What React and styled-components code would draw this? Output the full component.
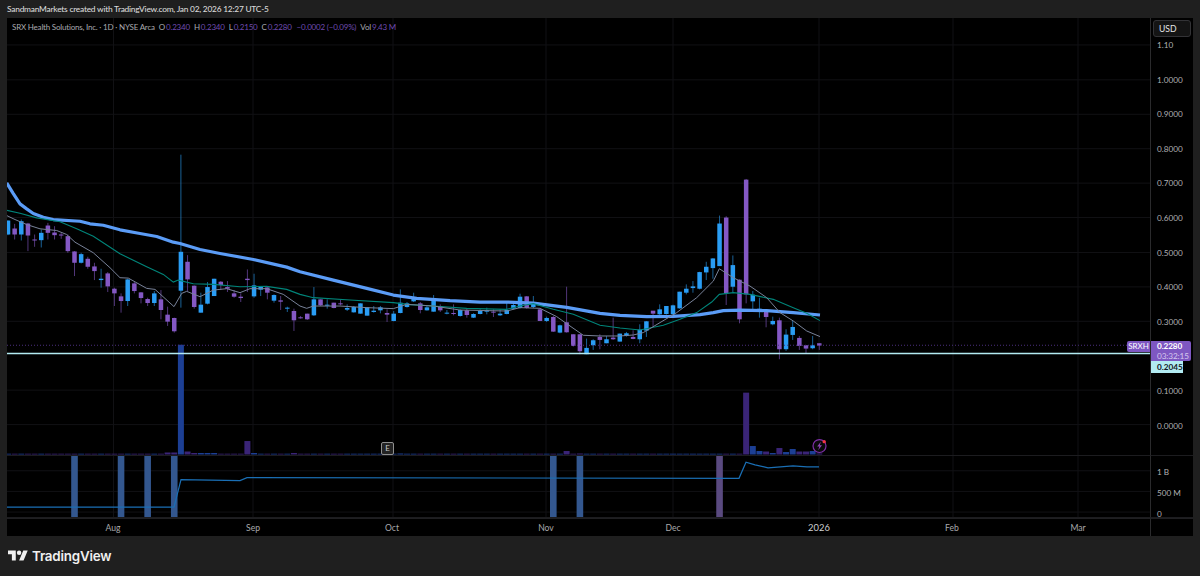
import React from "react";
import styled, { createGlobalStyle } from "styled-components";

const BLUE = "#2a9df4";
const PURPLE = "#8458c4";
const BAR_STEP = 6.65;
const barX = (i) => 8 + i * BAR_STEP;

// candles read off the picture: [wickTop, bodyTop, bodyBottom, wickBottom, colour], y in zoomed px
const section1 = [
  [153, 153, 195, 197, "b"], [163, 177, 195, 210, "p"], [150, 155, 195, 213, "b"], [160, 162, 198, 245, "p"],
  [195, 210, 212, 232, "p"], [180, 190, 212, 234, "b"], [160, 168, 190, 210, "p"], [170, 189, 197, 210, "p"],
  [190, 195, 198, 208, "p"], [195, 200, 245, 250, "p"], [245, 246, 280, 320, "p"], [250, 254, 280, 282, "b"],
  [262, 268, 292, 298, "p"], [280, 291, 305, 332, "p"], [298, 328, 332, 355, "b"], [308, 312, 351, 368, "p"],
  [355, 358, 372, 410, "p"], [372, 381, 395, 430, "p"], [328, 330, 395, 410, "b"], [338, 342, 365, 372, "p"],
  [368, 369, 386, 402, "p"], [385, 389, 401, 410, "p"], [365, 372, 401, 410, "b"], [362, 390, 422, 450, "p"],
  [412, 436, 457, 470, "p"], [445, 446, 486, 490, "p"], [-45, 247, 364, 415, "b"], [257, 277, 330, 365, "p"],
  [348, 349, 413, 418, "p"], [370, 406, 430, 430, "b"], [338, 353, 403, 405, "b"], [328, 328, 380, 380, "b"],
  [335, 337, 347, 362, "p"], [335, 353, 358, 368, "p"], [362, 372, 382, 385, "p"], [372, 382, 386, 398, "p"],
  [300, 328, 332, 368, "p"], [313, 348, 381, 385, "b"], [350, 350, 361, 380, "b"], [352, 354, 370, 390, "p"],
  [375, 377, 394, 400, "b"], [380, 393, 397, 422, "p"], [412, 415, 418, 428, "b"], [418, 425, 453, 485, "p"],
];
const section2 = [
  [170, 174, 176, 178, "p"], [163, 163, 180, 182, "p"], [83, 120, 168, 170, "b"], [120, 120, 138, 140, "p"],
  [120, 136, 139, 148, "b"], [130, 130, 146, 147, "p"], [120, 132, 135, 138, "p"], [135, 146, 151, 155, "b"],
  [140, 143, 159, 160, "b"], [132, 132, 163, 163, "b"], [144, 144, 169, 169, "b"], [140, 154, 158, 160, "b"],
  [140, 144, 153, 162, "b"], [150, 161, 166, 188, "p"], [155, 163, 185, 186, "b"], [90, 130, 161, 162, "b"],
  [128, 132, 143, 145, "b"], [100, 116, 126, 128, "b"], [128, 132, 152, 162, "p"], [138, 144, 153, 154, "b"],
  [107, 118, 157, 157, "b"], [135, 140, 153, 158, "p"], [152, 160, 163, 165, "b"], [135, 161, 163, 168, "p"],
  [150, 152, 170, 172, "b"], [148, 153, 167, 175, "p"], [162, 164, 175, 176, "b"], [150, 155, 164, 165, "b"],
  [145, 153, 157, 165, "b"], [150, 157, 160, 173, "p"], [150, 163, 168, 170, "b"], [130, 152, 164, 165, "b"],
  [130, 137, 148, 150, "b"], [103, 112, 146, 148, "b"], [110, 111, 146, 148, "p"], [110, 132, 143, 146, "b"],
  [148, 150, 185, 185, "p"], [172, 176, 185, 188, "b"], [170, 173, 217, 218, "p"], [196, 198, 220, 222, "b"],
  [82, 189, 219, 220, "p"], [225, 225, 260, 262, "p"], [225, 225, 276, 285, "p"], [238, 266, 285, 285, "b"],
  [240, 243, 258, 272, "b"],
];
const section3 = [
  [495, 503, 512, 540, "p"], [500, 510, 522, 522, "b"], [445, 505, 510, 512, "p"], [493, 493, 517, 517, "b"],
  [488, 492, 500, 502, "b"], [483, 503, 509, 510, "p"], [465, 481, 510, 522, "b"], [455, 456, 484, 503, "b"],
  [425, 424, 433, 472, "p"], [405, 420, 435, 437, "b"], [410, 410, 434, 436, "b"], [406, 408, 435, 436, "b"],
  [367, 367, 417, 418, "b"], [345, 358, 370, 375, "b"], [335, 351, 356, 370, "b"], [307, 308, 358, 360, "b"],
  [277, 292, 309, 332, "b"], [266, 267, 296, 328, "b"], [138, 162, 290, 290, "b"], [140, 144, 372, 407, "p"],
  [258, 287, 352, 370, "b"], [330, 331, 450, 462, "p"], [28, 30, 375, 402, "p"], [365, 376, 396, 420, "b"],
  [385, 418, 428, 445, "b"], [426, 426, 443, 474, "p"], [442, 455, 465, 468, "b"], [445, 453, 540, 570, "p"],
  [480, 496, 540, 545, "b"], [455, 473, 497, 512, "b"], [500, 506, 530, 542, "p"], [528, 528, 538, 552, "p"],
  [500, 528, 537, 540, "b"], [522, 522, 529, 542, "p"],
];

const toReal = (rows, origin) =>
  rows.map(([a, b, c, d, col]) => ({
    wickTop: origin + a / 3,
    top: origin + b / 3,
    bottom: origin + c / 3,
    wickBottom: origin + d / 3,
    color: col === "b" ? BLUE : PURPLE,
  }));

const candles = [...toReal(section1, 170), ...toReal(section2, 260), ...toReal(section3, 170)];

const line = (zoom1, zoom2, zoom3) =>
  [
    ...zoom1.map(([x, y]) => [x / 3, 170 + y / 3]),
    ...zoom2.map(([x, y]) => [300 + x / 3, 260 + y / 3]),
    ...zoom3.map(([x, y]) => [600 + x / 3, 170 + y / 3]),
  ]
    .map(([x, y]) => `${x.toFixed(1)},${y.toFixed(1)}`)
    .join(" ");

const slowAvg = line(
  [[20, 40], [40, 72], [60, 103], [80, 118], [100, 132], [130, 143], [160, 150], [240, 155], [270, 163], [310, 167], [360, 181], [420, 192], [470, 201], [520, 218], [540, 222], [600, 240], [660, 252], [760, 270], [860, 293]],
  [[0, 37], [100, 62], [200, 87], [280, 107], [350, 117], [450, 124], [540, 128], [620, 128], [700, 131], [800, 144]],
  [[0, 432], [60, 438], [140, 442], [220, 441], [300, 436], [340, 430], [370, 424], [420, 422], [500, 424], [580, 430], [660, 437]]
);
const midAvg = line(
  [[20, 122], [60, 131], [110, 145], [180, 157], [230, 178], [280, 200], [360, 253], [440, 292], [490, 315], [520, 338], [535, 332], [580, 343], [640, 345], [720, 352], [800, 351], [860, 360]],
  [[0, 105], [40, 115], [150, 122], [280, 130], [330, 136], [400, 140], [500, 147], [620, 150], [660, 140], [700, 133], [760, 150], [820, 165]],
  [[0, 468], [60, 476], [120, 482], [190, 468], [240, 450], [290, 430], [335, 398], [358, 375], [400, 370], [450, 375], [520, 390], [580, 415], [620, 432], [660, 454]]
);
const fastAvg = line(
  [[20, 138], [45, 150], [80, 165], [120, 178], [170, 183], [200, 195], [225, 218], [280, 250], [330, 295], [360, 325], [385, 326], [440, 357], [465, 360], [522, 412], [545, 372], [560, 366], [600, 382], [640, 362], [680, 358], [720, 370], [750, 358], [800, 358], [850, 375]],
  [[0, 140], [20, 147], [40, 140], [120, 140], [200, 145], [280, 148], [320, 135], [400, 140], [480, 152], [620, 155], [660, 145], [720, 147], [770, 172], [810, 200], [850, 228]],
  [[0, 500], [60, 500], [100, 497], [130, 490], [180, 460], [230, 430], [290, 385], [340, 335], [358, 298], [400, 325], [450, 350], [500, 385], [540, 430], [580, 455], [620, 485], [660, 502]]
);

const tallVolumes = {
  24: 2, 25: 2, 26: 110, 27: 3, 28: 1.5, 29: 1.5, 30: 1.5, 31: 1.5, 36: 13.5, 37: 1.5,
  43: 1.5, 59: 1, 84: 3.5, 86: 1,
  111: 62, 112: 8.5, 113: 3.5, 114: 3, 115: 1.5, 116: 6.5, 117: 2.5, 118: 5.5, 119: 3, 120: 3, 121: 3.5, 122: 1,
};
const volumes = candles.map((c, i) => ({
  x: barX(i),
  height: tallVolumes[i] || 0.8,
  color: c.color === BLUE ? "#1c3f94" : "#3a2477",
}));

const signalBars = [10, 17, 21, 25, 82, 86];
const priceTicks = ["1.10", "1.0000", "0.9000", "0.8000", "0.7000", "0.6000", "0.5000", "0.4000", "0.3000", "", "0.1000", "0.0000"];
const gridRows = [45, 80, 114.5, 149, 183.5, 218, 253, 287.5, 322, 391, 425.5];
const gridCols = [113.5, 253, 393, 546, 673, 819, 953, 1078];
const timeTicks = [
  { label: "Aug", x: 113 },
  { label: "Sep", x: 253 },
  { label: "Oct", x: 392 },
  { label: "Nov", x: 546 },
  { label: "Dec", x: 673 },
  { label: "2026", x: 819, strong: true },
  { label: "Feb", x: 952 },
  { label: "Mar", x: 1078 },
];

const GlobalStyle = createGlobalStyle`
  html, body { margin: 0; background: #1f1f1f; }
  body { font-family: "Lato", "Liberation Sans", sans-serif; }
`;

const Page = styled.div`
  width: 1200px;
  height: 576px;
  overflow: hidden;
  display: flex;
  flex-direction: column;
  background: #1f1f1f;
`;

const Caption = styled.div`
  height: 18px;
  padding-left: 7px;
  display: flex;
  align-items: center;
  font-size: 8.4px;
  font-weight: 500;
  letter-spacing: -0.24px;
  color: #d8d8d8;
  white-space: nowrap;
`;

const Frame = styled.div`
  width: 1186px;
  margin-left: 7px;
  display: grid;
  grid-template-columns: 1143px 43px;
  grid-template-rows: 438px 62px 18px;
  background: #000;
`;

const Pane = styled.div`
  position: relative;
  height: 100%;
  border-bottom: 1px solid #1c1c1f;
  box-sizing: border-box;
`;

const ChartSvg = styled.svg`
  display: block;
  width: 100%;
  height: 100%;
`;

const Legend = styled.div`
  position: absolute;
  top: 4px;
  left: 5px;
  display: flex;
  gap: 4px;
  font-size: 8px;
  letter-spacing: -0.2px;
  line-height: 10px;
  color: #a9a9ae;
  white-space: nowrap;
`;

const Value = styled.span`
  color: #6f4bb0;
  margin-left: 1px;
`;

const PriceAxis = styled.div`
  position: relative;
  border-left: 1px solid #2a2a2c;
  border-bottom: 1px solid #1c1c1f;
  box-sizing: border-box;
  display: flex;
  flex-direction: column;
  padding: 9.7px 0 0 6px;
  font-size: 8.2px;
  color: #b0b0b3;
`;

const PriceRow = styled.div`
  flex: 0 0 34.6px;
  display: flex;
  align-items: center;
`;

const SubAxis = styled.div`
  border-left: 1px solid #2a2a2c;
  border-bottom: 1px solid #1c1c1f;
  box-sizing: border-box;
  display: flex;
  flex-direction: column;
  padding: 5px 0 0 6px;
  font-size: 8.2px;
  color: #b0b0b3;
`;

const SubRow = styled.div`
  flex: 0 0 21px;
  display: flex;
  align-items: center;
`;

const CurrencyButton = styled.div`
  position: absolute;
  top: 2px;
  left: 2px;
  width: 38px;
  height: 17px;
  box-sizing: border-box;
  border: 1px solid #333336;
  border-radius: 3px;
  background: #141414;
  color: #e4e4e4;
  font-size: 8.6px;
  display: flex;
  align-items: center;
  padding-left: 5px;
`;

const LastPriceTag = styled.div`
  position: absolute;
  top: 323px;
  left: 0;
  width: 40px;
  height: 20px;
  box-sizing: border-box;
  padding: 1px 0 0 6px;
  background: #7e57c2;
  color: #fff;
  border-radius: 0 2px 2px 0;
  font-size: 8.2px;
  letter-spacing: -0.1px;
  line-height: 9.5px;
  font-weight: 700;
`;

const Countdown = styled.div`
  color: #d6c8ee;
  font-weight: 400;
`;

const LineTag = styled.div`
  position: absolute;
  top: 343px;
  left: 0;
  width: 32px;
  height: 12px;
  box-sizing: border-box;
  padding-left: 6px;
  background: #b2ebf2;
  color: #131722;
  font-size: 8.2px;
  line-height: 12px;
  font-weight: 700;
`;

const SymbolTag = styled.div`
  position: absolute;
  top: 323px;
  right: 0;
  width: 23px;
  height: 11px;
  background: #7e57c2;
  color: #fff;
  border-radius: 2px 0 0 2px;
  font-size: 8px;
  line-height: 11px;
  text-align: center;
`;

const EarningsMark = styled.div`
  position: absolute;
  top: 424px;
  left: 374px;
  width: 13px;
  height: 13px;
  box-sizing: border-box;
  border: 1px solid #8f8f8f;
  border-radius: 2px;
  background: #232323;
  color: #c9c9c9;
  font-size: 8px;
  line-height: 11px;
  text-align: center;
`;

const TimeAxis = styled.div`
  border-top: 1px solid #1f1f22;
  display: flex;
  align-items: center;
  color: #a8a8ab;
`;

const Tick = styled.div`
  flex: 0 0 40px;
  text-align: center;
  margin-left: ${(p) => p.$gap}px;
  color: ${(p) => (p.$strong ? "#cfcfd2" : "#a8a8ab")};
  font-size: ${(p) => (p.$strong ? "9.4px" : "8.6px")};
`;

const AxisCorner = styled.div`
  border-left: 1px solid #2a2a2c;
  border-top: 1px solid #1f1f22;
`;

const Brand = styled.div`
  flex: 1;
  display: flex;
  align-items: center;
  gap: 4px;
  padding: 0 0 0 8px;
  color: #f0f0f0;
  font-family: "Inter", "Liberation Sans", sans-serif;
  font-size: 13.4px;
  font-weight: 600;
  letter-spacing: -0.2px;
`;

const GridLines = ({ rows, top, bottom }) => (
  <g stroke="#111114" strokeWidth="1">
    {rows.map((y) => (
      <line key={y} x1="7" x2="1150" y1={y} y2={y} />
    ))}
    {gridCols.map((x) => (
      <line key={x} x1={x} x2={x} y1={top} y2={bottom} />
    ))}
  </g>
);

const Candle = ({ x, candle }) => (
  <g>
    <line
      x1={x}
      x2={x}
      y1={candle.wickTop}
      y2={candle.wickBottom}
      stroke={candle.color}
      strokeOpacity="0.62"
      strokeWidth="1"
    />
    <rect
      x={x - 2.25}
      y={candle.top}
      width="4.5"
      height={Math.max(candle.bottom - candle.top, 1)}
      fill={candle.color}
    />
  </g>
);

const BoltBadge = () => (
  <g>
    <circle cx="819.5" cy="447" r="6.5" fill="#0a0a0a" stroke="#7f2fa8" strokeWidth="1.2" />
    <path d="M820.8 442.8 L817.2 447.6 L819.4 447.6 L818.2 451.2 L822 446.2 L819.8 446.2 Z" fill="#8f45b8" />
    <circle cx="824.2" cy="442.6" r="1.7" fill="#f23645" />
  </g>
);

const Logo = () => (
  <svg width="20" height="16" viewBox="0 0 36 28" fill="#f0f0f0">
    <path d="M14 22H7V11H0V4h14v18zM28 22h-8l7.5-18h8L28 22z" />
    <circle cx="20" cy="8" r="4" />
  </svg>
);

export default function App() {
  return (
    <Page>
      <GlobalStyle />
      <Caption>SandmanMarkets created with TradingView.com, Jan 02, 2026 12:27 UTC-5</Caption>
      <Frame>
        <Pane>
          <ChartSvg viewBox="7 18 1143 438" preserveAspectRatio="none">
            <GridLines rows={gridRows} top={18} bottom={456} />
            {volumes.map((v) => (
              <rect key={v.x} x={v.x - 3} y={455.5 - v.height} width="6" height={v.height} fill={v.color} />
            ))}
            {candles.map((c, i) => (
              <Candle key={i} x={barX(i)} candle={c} />
            ))}
            <polyline points={slowAvg} fill="none" stroke="#5b9cf6" strokeWidth="3.2" strokeLinejoin="round" />
            <polyline points={midAvg} fill="none" stroke="#00857a" strokeWidth="1.1" />
            <polyline points={fastAvg} fill="none" stroke="#78839a" strokeWidth="1" />
            <line x1="7" x2="1150" y1="346" y2="346" stroke="#4b2f80" strokeWidth="1" strokeDasharray="1 2" />
            <line x1="7" x2="1150" y1="354.3" y2="354.3" stroke="#b2ebf2" strokeWidth="1.4" />
            <BoltBadge />
          </ChartSvg>
          <Legend>
            <span>SRX Health Solutions, Inc. · 1D · NYSE Arca</span>
            <span>O<Value>0.2340</Value></span>
            <span>H<Value>0.2340</Value></span>
            <span>L<Value>0.2150</Value></span>
            <span>C<Value>0.2280</Value></span>
            <Value>−0.0002 (−0.09%)</Value>
            <span>Vol<Value>9.43 M</Value></span>
          </Legend>
          <SymbolTag>SRXH</SymbolTag>
          <EarningsMark>E</EarningsMark>
        </Pane>
        <PriceAxis>
          {priceTicks.map((t, i) => (
            <PriceRow key={i}>{t}</PriceRow>
          ))}
          <CurrencyButton>USD</CurrencyButton>
          <LastPriceTag>
            0.2280
            <Countdown>03:32:15</Countdown>
          </LastPriceTag>
          <LineTag>0.2045</LineTag>
        </PriceAxis>
        <Pane>
          <ChartSvg viewBox="7 456 1143 62" preserveAspectRatio="none">
            <GridLines rows={[471, 492, 513]} top={456} bottom={518} />
            {signalBars.map((i) => (
              <rect key={i} x={barX(i) - 3.3} y="456" width="6.6" height="62" fill="#33578f" />
            ))}
            <rect x={barX(107) - 3.3} y="456" width="6.6" height="62" fill="#5a4a80" />
            <polyline
              points="7,508 174,508 181,480 240,481 247,478 739,478.7 746,462.3 755,465 768,468 793,466 807,467 819,467"
              fill="none"
              stroke="#1a6fb5"
              strokeWidth="1.2"
            />
          </ChartSvg>
        </Pane>
        <SubAxis>
          <SubRow>1 B</SubRow>
          <SubRow>500 M</SubRow>
          <SubRow>0</SubRow>
        </SubAxis>
        <TimeAxis>
          {timeTicks.map((t, i) => (
            <Tick
              key={t.label}
              $strong={t.strong}
              $gap={i === 0 ? t.x - 7 - 20 : t.x - timeTicks[i - 1].x - 40}
            >
              {t.label}
            </Tick>
          ))}
        </TimeAxis>
        <AxisCorner />
      </Frame>
      <Brand>
        <Logo />
        TradingView
      </Brand>
    </Page>
  );
}
